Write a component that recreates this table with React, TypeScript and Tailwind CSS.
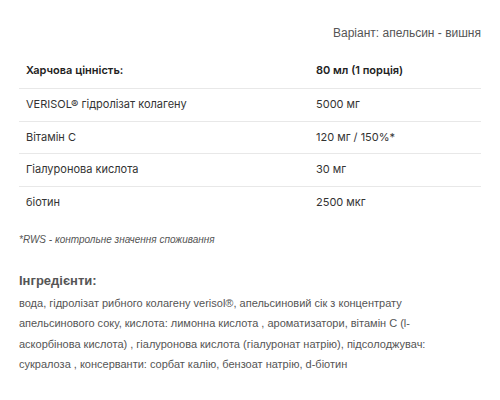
const rows = [
  { name: 'VERISOL® гідролізат колагену', value: '5000 мг' },
  { name: 'Вітамін C', value: '120 мг / 150%*' },
  { name: 'Гіалуронова кислота', value: '30 мг' },
  { name: 'біотин', value: '2500 мкг' },
]

export default function App() {
  return (
    <div className="w-[500px] h-[400px] bg-white px-[19px] pt-[26px]" style={{ fontFamily: "'Liberation Sans', Arial, sans-serif" }}>
      <div className="text-right text-[12px] leading-[14px] text-[#555]">Варіант: апельсин - вишня</div>

      <div className="mt-[21px]" style={{ fontFamily: "Inter, 'Noto Sans', sans-serif" }}>
        <div className="flex border-b border-[#e8e8e8] pt-[2px] pb-[11px] pl-[7px] text-[11px] leading-[14px] font-semibold text-[#222]">
          <div className="w-[290px]">Харчова цінність:</div>
          <div>80 мл (1 порція)</div>
        </div>
        {rows.map((r, i) => (
          <div
            key={r.name}
            className={`flex pt-[8px] pb-[9.5px] pl-[7px] text-[11px] leading-[14px] text-[#333] ${i < rows.length - 1 ? 'border-b border-[#e8e8e8]' : ''}`}
          >
            <div className="w-[290px]">{r.name}</div>
            <div>{r.value}</div>
          </div>
        ))}
      </div>

      <p className="mt-[15px] text-[10px] leading-[14px] italic text-[#555]">*RWS - контрольне значення споживання</p>

      <h3 className="mt-[26px] text-[13px] leading-[16px] font-bold text-[#555]">Інгредієнти:</h3>
      <p className="mt-[4px] w-[440px] text-[11px] leading-[20.3px] text-[#555]">
        вода, гідролізат рибного колагену verisol®, апельсиновий сік з концентрату апельсинового соку, кислота: лимонна кислота , ароматизатори, вітамін C (l-аскорбінова кислота) , гіалуронова кислота (гіалуронат натрію), підсолоджувач: сукралоза , консерванти: сорбат калію, бензоат натрію, d-біотин
      </p>
    </div>
  )
}
